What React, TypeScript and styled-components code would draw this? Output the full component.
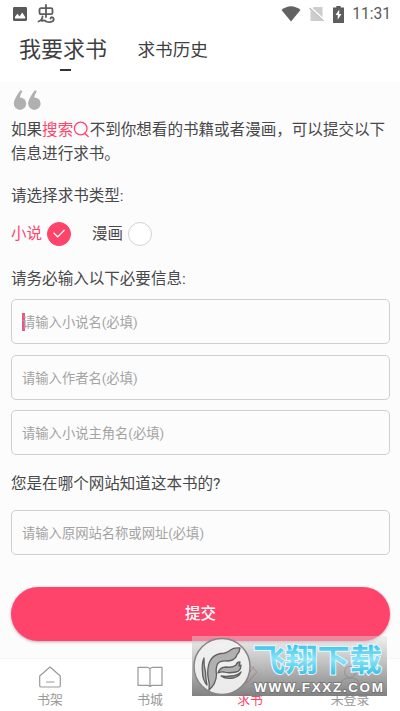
import React from "react";
import styled, { createGlobalStyle } from "styled-components";

const PINK = "#ff446c";

const GlobalStyle = createGlobalStyle`
  * { box-sizing: border-box; }
  body { margin: 0; background: #fff; overflow: hidden; }
`;

const Screen = styled.div`
  width: 400px;
  height: 711px;
  display: flex;
  flex-direction: column;
  position: relative;
  overflow: hidden;
  color: #48484b;
  background: #fff;
  font-family: Roboto, "Noto Sans CJK SC", sans-serif;
`;

const StatusBar = styled.div`
  height: 28px;
  flex: none;
  display: flex;
  justify-content: space-between;
  padding: 0 9px 0 13px;
`;

const StatusGroup = styled.div<{ $gap: number }>`
  display: flex;
  align-items: center;
  gap: ${(p) => p.$gap}px;
`;

const Clock = styled.span`
  font-size: 15.6px;
  line-height: 29px;
  color: #5a5a5a;
  font-weight: 400;
`;

const Tabs = styled.nav`
  height: 54px;
  flex: none;
  display: flex;
  padding-left: 19px;
  gap: 30.5px;
`;

const Tab = styled.div<{ $active?: boolean }>`
  display: flex;
  flex-direction: column;
  align-items: center;
  font-size: ${(p) => (p.$active ? 22 : 17.6)}px;
  line-height: ${(p) => (p.$active ? 43 : 44)}px;
  height: 42px;
  color: #3f3f42;
`;

const TabMark = styled.i`
  width: 11px;
  height: 2px;
  margin: -2px 0 0 5px;
  background: #333;
  flex: none;
`;

const Main = styled.main`
  height: 576px;
  flex: none;
  display: flex;
  flex-direction: column;
  background: #fcfcfc;
  padding: 8px 10px 0 11px;
`;

const Intro = styled.p`
  margin: 7px -10px 0 0;
  font-size: 15.55px;
  line-height: 24px;
`;

const SearchLink = styled.span`
  color: ${PINK};
  svg { vertical-align: -3px; }
`;

const Label = styled.h2<{ $top: number }>`
  margin: ${(p) => p.$top}px 0 0;
  font-size: 15.55px;
  line-height: 24px;
  font-weight: 400;
`;

const Options = styled.div`
  display: flex;
  gap: 21px;
  margin-top: 14px;
  height: 24px;
`;

const Option = styled.div<{ $on?: boolean }>`
  display: flex;
  align-items: center;
  gap: 5px;
  font-size: 15.5px;
  line-height: 24px;
  color: ${(p) => (p.$on ? PINK : "#48484b")};
`;

const Radio = styled.span<{ $on?: boolean }>`
  width: 24px;
  height: 24px;
  border-radius: 50%;
  display: grid;
  place-items: center;
  border: 1px solid ${(p) => (p.$on ? PINK : "#d2d2d2")};
  background: ${(p) => (p.$on ? PINK : "#fff")};
`;

const Fields = styled.div<{ $top: number }>`
  display: flex;
  flex-direction: column;
  gap: 10.5px;
  margin-top: ${(p) => p.$top}px;
`;

const Field = styled.div`
  height: 45px;
  border: 1px solid #cfcfcf;
  border-radius: 5px;
  display: flex;
  align-items: center;
  padding-left: 10px;
  font-size: 13.3px;
  color: #a3a3a3;
`;

const Caret = styled.i`
  width: 3px;
  height: 18px;
  margin-right: -3px;
  background: #e45a7d;
`;

const Submit = styled.button`
  height: 54px;
  flex: none;
  margin-top: 32px;
  border: 0;
  border-radius: 27px;
  background: ${PINK};
  color: #fff;
  font: 500 15.5px/54px Roboto, "Noto Sans CJK SC", sans-serif;
  padding: 0;
  box-shadow: 0 1px 3px rgba(90, 50, 60, 0.4);
`;

const BottomNav = styled.nav`
  flex: 1;
  display: grid;
  grid-template-columns: repeat(4, 1fr);
  background: #fff;
  border-top: 1px solid #f5f5f5;
`;

const NavItem = styled.div<{ $on?: boolean }>`
  display: flex;
  flex-direction: column;
  align-items: center;
  padding-top: 5px;
  font-size: 12.8px;
  line-height: 19px;
  color: ${(p) => (p.$on ? PINK : "#999")};
  svg { display: block; flex: none; }
`;

const Watermark = styled.aside`
  position: absolute;
  left: 192px;
  top: 636px;
  width: 195px;
  height: 60px;
  display: flex;
  background: linear-gradient(rgba(225, 225, 225, 0.42), rgba(170, 170, 170, 0.8) 50%, rgba(120, 120, 120, 0.93));
  svg { display: block; flex: none; overflow: visible; }
`;

const ImageIcon = () => (
  <svg width="14" height="14" viewBox="0 0 14 14">
    <rect width="14" height="14" rx="1.3" fill="#595959" />
    <path d="M2 11.5V9.7l2.5-3 2 2.7 2.7-4 3 4.5v1.6z" fill="#fff" />
  </svg>
);

const BugIcon = () => (
  <svg width="18" height="20" viewBox="0 0 18 20" fill="none" stroke="#5d5d5d" strokeWidth="1.8" strokeLinecap="round" strokeLinejoin="round">
    <path d="M9 1v12M4 4.2h10q1.5 0 1.5 1.5v3q0 1.5-1.5 1.5H4Q2.5 10.2 2.5 8.7V5.7Q2.5 4.2 4 4.2M5.5 12.5q0 3.5-4 5M5 17q2-1.5 4.2.5 3.5 1.5 6.8-.5 1.5-2-.2-3.5-2-.8-2.3 1" />
  </svg>
);

const WifiIcon = () => (
  <svg width="20" height="16" viewBox="0 0 20 16">
    <path d="M.5 4Q10-3.5 19.5 4L10 15.5z" fill="#626262" />
  </svg>
);

const NoSimIcon = () => (
  <svg width="16" height="16" viewBox="0 0 16 16">
    <path d="M5 1h8.5v14H1.5V4z" fill="#cdcdcd" />
    <path d="M0 .5l15 14" stroke="#fff" strokeWidth="2.5" />
    <path d="M.5 2l14 13" stroke="#bbb" strokeWidth="1.2" />
  </svg>
);

const BatteryIcon = () => (
  <svg width="11" height="17" viewBox="0 0 11 17">
    <path d="M3.3 0h4.4v1.5H11V17H0V1.5h3.3z" fill="#5d5d5d" />
    <path d="M6.3 3.5L2.5 9h2.2v4.8L8.5 8H6.2z" fill="#fff" />
  </svg>
);

const QuoteIcon = () => (
  <svg width="32" height="21" viewBox="0 0 32 21" fill="#b0b0b0">
    <circle cx="9" cy="13.7" r="6.2" />
    <circle cx="23.4" cy="13.7" r="6.2" />
    <path d="M2.8 14Q3.2 8 9.5.2l2 .8Q9.2 4.5 8.800 8zM17.2 14Q17.6 8 23.9.2l2 .8q-2.3 3.5-2.7 7z" />
  </svg>
);

const SearchIcon = () => (
  <svg width="16.5" height="17" viewBox="0 0 16.5 17" fill="none" stroke={PINK} strokeWidth="1.3">
    <circle cx="7.7" cy="7.5" r="6.3" />
    <path d="M11.5 12.2l3.7 3.4" strokeLinecap="round" />
  </svg>
);

const CheckIcon = () => (
  <svg width="14" height="10" viewBox="0 0 14 10" fill="none" stroke="#fff" strokeWidth="1.2">
    <path d="M1.5 3.8l4.2 4L12.5 1" />
  </svg>
);

const navStroke = { fill: "none", strokeWidth: 1.2, strokeLinejoin: "round" as const, strokeLinecap: "round" as const };

const HomeIcon = () => (
  <svg width="26" height="26" viewBox="0 0 26 26" stroke="#999" {...navStroke}>
    <path d="M13 3L2.7 12v9.4q0 1.6 1.6 1.6h17.4q1.6 0 1.6-1.6V12zM9.5 18h7.5" />
  </svg>
);

const BookIcon = () => (
  <svg width="26" height="26" viewBox="0 0 26 26" stroke="#999" {...navStroke}>
    <path d="M13 4.8Q12 3.4 10 3.4H1v18h10l2 1 2-1h10v-18h-9q-2 0-3 1.400zM13 5v17" />
  </svg>
);

const PenIcon = () => (
  <svg width="26" height="26" viewBox="0 0 26 26" stroke={PINK} {...navStroke}>
    <path d="M4 3h13M4 3v18l7-3M16 4l4 4-8 9-4 1 1-5zM14 20h7" />
  </svg>
);

const UserIcon = () => (
  <svg width="26" height="26" viewBox="0 0 26 26" stroke="#777" {...navStroke}>
    <circle cx="13" cy="8" r="5.5" />
    <path d="M3 22q1-8 10-8t10 8" />
  </svg>
);

const BirdLogo = () => (
  <svg width="60" height="60" viewBox="0 0 60 60">
    <circle cx="30" cy="30.5" r="28" fill="#f0f0f0" fillOpacity=".95" stroke="#858585" strokeWidth="1.5" />
    <g stroke="#5f5f5f" strokeWidth="1.3" strokeLinejoin="round" fill="#b0b0b0">
      <path d="M12 22q-2.500 6-1.500 14 0 8 4.500 13-1.500-7-1.500-13Q11.500 29 12 22z" />
      <path d="M17 54q1-6-1-13-1-8 1.500-15 3-7 11-8.500 6 0 10-3.500 3-2.500 9.500-2l-1 4q-2 2-3 5-3 4-9 4-7-.5-9.500 3-2 4-1 11-.5 9-7.500 15z" />
      <path d="M26 37q2-6 8-6 7 1 10-2 1-3 4-3l-1 4 2-1q0 6-5 7-8 1.500-12 0-3-.5-6 1z" />
      <path d="M29 40q5 1 10 0 6 0 10-4-2 5-8 6-7 1.500-12-2z" />
    </g>
  </svg>
);

const BrandText = () => (
  <svg width="135" height="60" viewBox="0 0 135 60">
    <defs>
      <linearGradient id="brandBlue" x1="0" x2="0" y1="0" y2="1">
        <stop offset="0.2" stopColor="#38bfe6" />
        <stop offset=".55" stopColor="#8be4f8" />
        <stop offset=".9" stopColor="#38bfe6" />
      </linearGradient>
    </defs>
    <text x="1" y="34.5" textLength="129" lengthAdjust="spacingAndGlyphs" fontFamily="Noto Sans CJK SC, sans-serif" fontSize="31" fontWeight="700" fill="url(#brandBlue)" stroke="#e4f9ff" strokeWidth="2" paintOrder="stroke">飞翔下载</text>
    <text x="2" y="55.5" textLength="129" lengthAdjust="spacing" fontFamily="Liberation Sans, sans-serif" fontSize="13.5" fontWeight="700" fill="#fff" stroke="#707070" strokeWidth="1.4" paintOrder="stroke">WWW.FXXZ.COM</text>
  </svg>
);

export default function App() {
  return (
    <Screen>
      <GlobalStyle />
      <StatusBar>
        <StatusGroup $gap={10}>
          <ImageIcon />
          <BugIcon />
        </StatusGroup>
        <StatusGroup $gap={8}>
          <WifiIcon />
          <NoSimIcon />
          <BatteryIcon />
          <Clock>11:31</Clock>
        </StatusGroup>
      </StatusBar>
      <Tabs>
        <Tab $active>
          我要求书
          <TabMark />
        </Tab>
        <Tab>求书历史</Tab>
      </Tabs>
      <Main>
        <QuoteIcon />
        <Intro>
          如果<SearchLink>搜索<SearchIcon /></SearchLink>不到你想看的书籍或者漫画，可以提交以下
          <br />
          信息进行求书。
        </Intro>
        <Label $top={18}>请选择求书类型:</Label>
        <Options>
          <Option $on>
            小说
            <Radio $on><CheckIcon /></Radio>
          </Option>
          <Option>
            漫画
            <Radio />
          </Option>
        </Options>
        <Label $top={21}>请务必输入以下必要信息:</Label>
        <Fields $top={8.4}>
          <Field><Caret />请输入小说名(必填)</Field>
          <Field>请输入作者名(必填)</Field>
          <Field>请输入小说主角名(必填)</Field>
        </Fields>
        <Label $top={17.1}>您是在哪个网站知道这本书的?</Label>
        <Fields $top={14}>
          <Field>请输入原网站名称或网址(必填)</Field>
        </Fields>
        <Submit>提交</Submit>
      </Main>
      <BottomNav>
        <NavItem><HomeIcon />书架</NavItem>
        <NavItem><BookIcon />书城</NavItem>
        <NavItem $on><PenIcon />求书</NavItem>
        <NavItem><UserIcon />未登录</NavItem>
      </BottomNav>
      <Watermark>
        <BirdLogo />
        <BrandText />
      </Watermark>
    </Screen>
  );
}
